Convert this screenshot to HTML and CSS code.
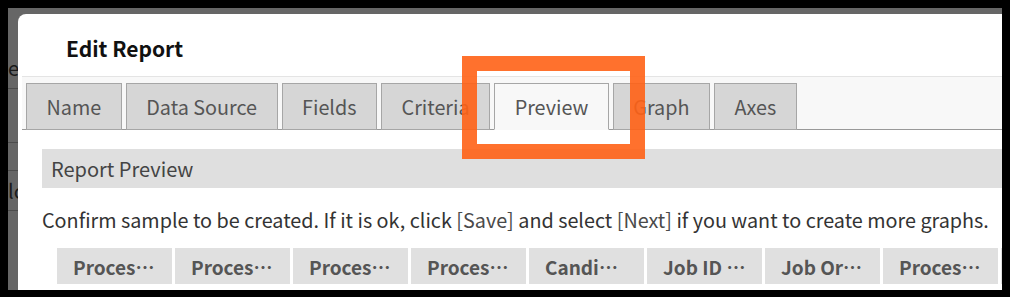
FILE: index.html
```html
<!DOCTYPE html>
<html lang="en">
<head>
    <meta charset="UTF-8">
    <meta name="viewport" content="width=device-width, initial-scale=1.0">
    <title>Edit Report</title>
    <link rel="stylesheet" href="styles.css">
</head>
<body>
    <div class="frame">
        <div class="screen">
            <div class="page">
                <div class="page-row row-1">e</div>
                <div class="page-row row-2"></div>
                <div class="page-row row-3"></div>
                <div class="page-row row-4">lo</div>
            </div>

            <div class="dialog">
                <h1 class="dialog-title">Edit Report</h1>

                <ul class="tab-bar">
                    <li class="tab">Name</li>
                    <li class="tab">Data Source</li>
                    <li class="tab">Fields</li>
                    <li class="tab">Criteria</li>
                    <li class="tab active">Preview</li>
                    <li class="tab">Graph</li>
                    <li class="tab">Axes</li>
                </ul>

                <div class="dialog-body">
                    <div class="section-header">Report Preview</div>
                    <p class="hint">Confirm sample to be created. If it is ok, click <span class="key">[Save]</span> and select <span class="key">[Next]</span> if you want to create more graphs.</p>

                    <table class="preview-table">
                        <thead>
                            <tr>
                                <th>Process Name</th>
                                <th>Process Code</th>
                                <th>Process Type</th>
                                <th>Process Owner</th>
                                <th>Candidate</th>
                                <th>Job ID Number</th>
                                <th>Job Order</th>
                                <th>Process Date</th>
                                <th>Process Status</th>
                            </tr>
                        </thead>
                    </table>
                </div>
            </div>

            <div class="highlight"></div>
        </div>
    </div>
</body>
</html>
```

FILE: styles.css
```css
* {
    box-sizing: border-box;
}

body {
    margin: 0;
    background-color: #000;
    font-family: "Noto Sans CJK JP", "Noto Sans", sans-serif;
}

.frame {
    width: 1010px;
    height: 297px;
    padding: 8px 8px 7px 8px;
}

.screen {
    position: relative;
    width: 994px;
    height: 282px;
    background-color: #666;
    overflow: hidden;
}

/* page behind the modal */
.page {
    padding-top: 40px;
}

.page-row {
    height: 40px;
    border-bottom: 1px solid #4c4c4c;
    font-size: 20px;
    color: #1a1a1a;
    line-height: 40px;
}

.row-1 {
    height: 41px;
}

.row-2 {
    height: 54px;
}

.row-3 {
    height: 28px;
}

.row-4 {
    height: 40px;
}

/* modal */
.dialog {
    position: absolute;
    left: 10px;
    top: 6px;
    width: 1040px;
    height: 320px;
    background-color: #fff;
    border-radius: 8px 0 0 0;
}

.dialog-title {
    margin: 0;
    padding: 19px 0 0 48px;
    height: 62px;
    font-size: 21px;
    font-weight: bold;
    color: #111;
    line-height: 30px;
}

.tab-bar {
    display: flex;
    gap: 4px;
    margin: 0 0 0 4px;
    padding: 6px 4px 0 4px;
    list-style: none;
    background-color: #f8f8f8;
    border-top: 1px solid #e4e4e4;
    border-bottom: 1px solid #999;
}

.tab {
    height: 47px;
    margin-bottom: -1px;
    padding: 0 19.5px;
    background-color: #d6d6d6;
    border: 1px solid #a6a6a6;
    font-size: 19.8px;
    line-height: 46px;
    color: #555;
}

.tab.active {
    background-color: #f8f8f8;
    border-bottom-color: #f8f8f8;
}

.dialog-body {
    padding: 19px 0 0 24px;
}

.section-header {
    height: 39px;
    padding-left: 9px;
    background-color: #dfdfdf;
    font-size: 20px;
    line-height: 39px;
    color: #444;
}

.hint {
    margin: 15px 0 8px 0;
    font-size: 19.8px;
    line-height: 34px;
    color: #333;
}

.hint .key {
    color: #4a4a4a;
}

.preview-table {
    margin-left: 12px;
    border-spacing: 3px;
    table-layout: fixed;
    width: 1058px;
}

.preview-table th {
    width: 115px;
    height: 36px;
    padding: 0 16px;
    background-color: #e0e0e0;
    font-size: 19px;
    font-weight: bold;
    color: #555;
    white-space: nowrap;
    overflow: hidden;
    text-overflow: ellipsis;
}

/* annotation box */
.highlight {
    position: absolute;
    left: 454px;
    top: 48px;
    width: 183px;
    height: 103px;
    border: 15px solid rgba(255, 98, 22, 0.9);
}
```
